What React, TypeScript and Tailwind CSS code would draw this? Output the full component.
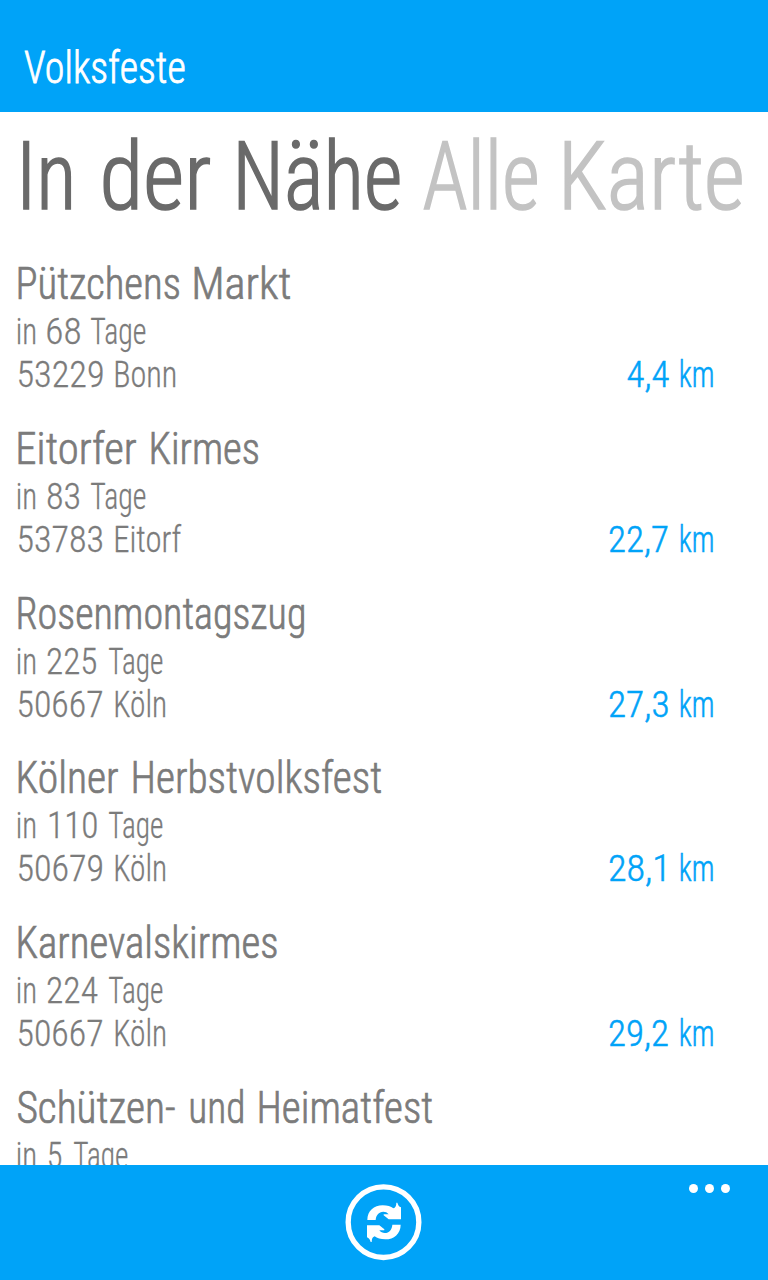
import { useMemo } from 'react';

// A word with the left and right edges of its ink on the page.
type Word = [text: string, left: number, right: number];

type Festival = {
  name: Word[];
  when: Word[];
  place: Word[];
  distance: Word[];
};

const festivals: Festival[] = [
  {
    name: [['Pützchens', 18, 180], ['Markt', 194, 291]],
    when: [['in', 17, 36], ['68', 47, 80.5], ['Tage', 90, 146]],
    place: [['53229', 17.5, 103], ['Bonn', 114.5, 175.5]],
    distance: [['4,4', 626.5, 669], ['km', 680, 713.5]],
  },
  {
    name: [['Eitorfer', 18, 136.5], ['Kirmes', 150.5, 258.5]],
    when: [['in', 17, 36], ['83', 47, 80], ['Tage', 90, 146]],
    place: [['53783', 17.5, 102.5], ['Eitorf', 114.5, 181.5]],
    distance: [['22,7', 609, 668], ['km', 680, 713.5]],
  },
  {
    name: [['Rosenmontagszug', 18, 304.5]],
    when: [['in', 17, 36], ['225', 47, 97], ['Tage', 108, 163]],
    place: [['50667', 17.5, 102], ['Köln', 114.5, 165.5]],
    distance: [['27,3', 609, 668.5], ['km', 680, 713.5]],
  },
  {
    name: [['Kölner', 18, 118.5], ['Herbstvolksfest', 132.5, 381.5]],
    when: [['in', 17, 36], ['110', 48.5, 97], ['Tage', 108, 163]],
    place: [['50679', 17.5, 102.5], ['Köln', 114.5, 165.5]],
    distance: [['28,1', 609, 665], ['km', 680, 713.5]],
  },
  {
    name: [['Karnevalskirmes', 18, 277.5]],
    when: [['in', 17, 36], ['224', 47, 98], ['Tage', 108, 163]],
    place: [['50667', 17.5, 102], ['Köln', 114.5, 165.5]],
    distance: [['29,2', 609, 668.5], ['km', 680, 713.5]],
  },
  {
    name: [['Schützen-', 17, 175.5], ['und', 190, 243.5], ['Heimatfest', 259, 433]],
    when: [['in', 17, 36], ['5', 48, 62], ['Tage', 73, 128]],
    place: [],
    distance: [],
  },
];

// Measured at twenty times the size, as the canvas rounds its ink bounds to whole pixels.
const PRECISION = 20;

// Room on each side for the outline and the smoothing of the edges.
const INSET = 0.7;

function measure(text: string, size: number) {
  const ctx = document.createElement('canvas').getContext('2d')!;
  ctx.font = `300 ${size * PRECISION}px "Roboto Condensed"`;
  const m = ctx.measureText(text);
  return {
    left: m.actualBoundingBoxLeft / PRECISION,
    ink: (m.actualBoundingBoxLeft + m.actualBoundingBoxRight) / PRECISION,
  };
}

// One word, condensed or widened so that its ink fills the given width.
function FitWord({ text, width, gap, size }: { text: string; width: number; gap: number; size: number }) {
  const { left, ink } = useMemo(() => measure(text, size), [text, size]);
  return (
    <span className="block shrink-0 whitespace-nowrap" style={{ width, marginLeft: gap }}>
      <span
        className="block w-max origin-left"
        style={{ transform: `translateX(${INSET}px) scaleX(${(width - 2 * INSET) / ink}) translateX(${left}px)` }}
      >
        {text}
      </span>
    </span>
  );
}

function Line({ words, size, origin = 0, className = '' }: { words: Word[]; size: number; origin?: number; className?: string }) {
  return (
    <span className={`flex ${className}`}>
      {words.map(([text, left, right], i) => (
        <FitWord
          key={i}
          text={text}
          size={size}
          width={right - left}
          gap={left - (i ? words[i - 1][2] : origin)}
        />
      ))}
    </span>
  );
}

function RefreshIcon() {
  const arrow =
    'M112 166 C112 139 132 122 158 122 C172 122 183 126 190 131 C196 129 199 124 199 114 L202 114 C204 121 207 126 213 128 L213 164 L176 164 L161 152 L161 149 L176 149 C172 143 166 141 160 141 C146 141 138 152 137 166 Z';
  return (
    <svg viewBox="45 58 231 231" className="size-[77px]" fill="white">
      <circle cx="160.5" cy="172.5" r="106" fill="none" stroke="white" strokeWidth="16" />
      <path d={arrow} />
      <path d={arrow} transform="rotate(180 162 173)" />
    </svg>
  );
}

export default function App() {
  return (
    <div className="flex h-[1280px] w-[768px] flex-col overflow-hidden bg-white font-['Roboto_Condensed','Roboto',sans-serif] font-light">
      <header className="h-28 shrink-0 bg-[#00a3f8] pt-[38px] text-[45px] leading-[60px] text-white [-webkit-text-stroke:0.8px_white]">
        <h1>
          <Line words={[['Volksfeste', 24, 185]]} size={45} />
        </h1>
      </header>

      <nav className="flex h-[145px] shrink-0 pt-[10px] text-[94px] leading-[110px]">
        <Line
          words={[['In', 22.5, 71.5], ['der', 103, 210], ['Nähe', 238, 400]]}
          size={94}
          className="text-[#6a6a6a] [-webkit-text-stroke:1.6px_#6a6a6a]"
        />
        <Line
          words={[['Alle', 422.5, 537], ['Karte', 563.5, 742]]}
          size={94}
          origin={400}
          className="text-[#c3c3c3] [-webkit-text-stroke:1.6px_#c3c3c3]"
        />
      </nav>

      <main className="flex min-h-0 flex-1 flex-col gap-[25.8px] overflow-hidden text-[#7b7b7b] [-webkit-text-stroke:0.7px]">
        {festivals.map((f, i) => (
          <article key={i} className="h-[139px] shrink-0">
            <h2 className="text-[45px] leading-[53px]">
              <Line words={f.name} size={45} />
            </h2>
            <div className="text-[36.5px] leading-[43px] [-webkit-text-stroke:0.3px]">
              <Line words={f.when} size={36.5} />
              <div className="flex">
                <Line words={f.place} size={36.5} />
                {f.distance.length > 0 && (
                  <Line
                    words={f.distance}
                    size={36.5}
                    origin={f.place[f.place.length - 1][2]}
                    className="text-[#00a3f8] [-webkit-text-stroke:0.5px]"
                  />
                )}
              </div>
            </div>
          </article>
        ))}
      </main>

      <footer className="grid h-[115px] shrink-0 grid-cols-3 bg-[#00a3f8]">
        <div />
        <button aria-label="Aktualisieren" className="flex justify-center self-start pt-[19px] pr-px">
          <RefreshIcon />
        </button>
        <button aria-label="Mehr" className="flex gap-[7px] self-start justify-self-end pt-[19px] pr-[38px]">
          <span className="size-[9px] rounded-full bg-white" />
          <span className="size-[9px] rounded-full bg-white" />
          <span className="size-[9px] rounded-full bg-white" />
        </button>
      </footer>
    </div>
  );
}
